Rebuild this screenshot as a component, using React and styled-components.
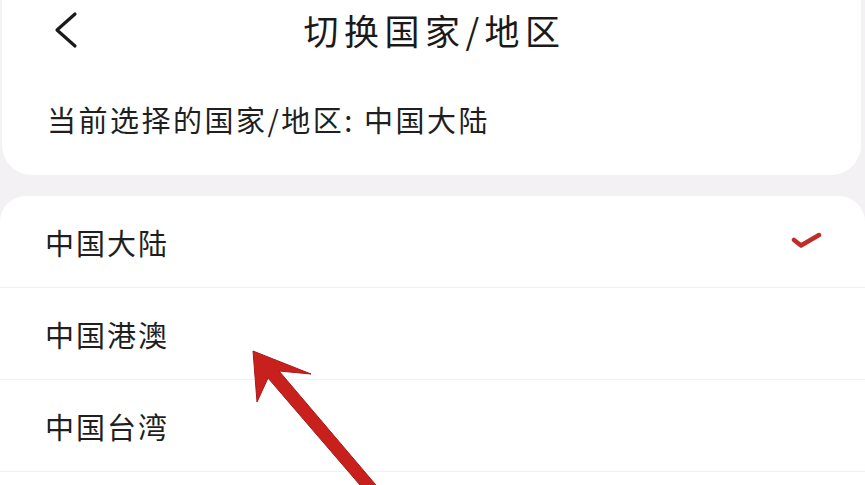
import React from 'react';
import styled, { createGlobalStyle } from 'styled-components';

const GlobalStyle = createGlobalStyle`
	html, body {
		margin: 0;
		padding: 0;
		background: #f4f1f4;
	}
	body {
		font-family: "Noto Sans CJK SC", "Noto Sans", sans-serif;
		color: #1f1f1f;
	}
	#root {
		min-height: 100vh;
	}
`;

const Page = styled.div`
	position: relative;
	display: flex;
	flex-direction: column;
	width: 865px;
	height: 485px;
	overflow: hidden;
	background: #f4f1f4;
`;

const TopCard = styled.section`
	margin: 0 4px 0 2px;
	background: #fff;
	border-radius: 0 0 30px 30px;
`;

const Header = styled.header`
	display: grid;
	grid-template-columns: 1fr auto 1fr;
	align-items: center;
	height: 60px;
`;

const BackBtn = styled.button`
	justify-self: start;
	display: flex;
	align-items: center;
	margin-left: 51px;
	padding: 0;
	width: 26px;
	height: 40px;
	border: none;
	background: transparent;
`;

const Title = styled.h1`
	margin: 0 0 0 6px;
	font-size: 35px;
	font-weight: 400;
	letter-spacing: 5.5px;
	line-height: 40px;
	color: #1a1a1a;
`;

const Current = styled.div`
	padding: 39px 45px 36px;
	font-size: 29px;
	letter-spacing: 2.5px;
	line-height: 40px;
`;

const ListCard = styled.ul`
	flex: 1;
	list-style: none;
	margin: 21px 0 0 0;
	padding: 0;
	background: #fff;
	border-radius: 26px 26px 0 0;
`;

const Row = styled.li`
	display: flex;
	align-items: center;
	justify-content: space-between;
	height: 91px;
	padding: 0 43px 0 45px;
	border-bottom: 1px solid #f2f1f2;
	font-size: 29px;
	letter-spacing: 2px;
`;

const Arrow = styled.svg`
	position: absolute;
	left: 0;
	top: 0;
	pointer-events: none;
`;

const regions = [
	{ name: '中国大陆', checked: true },
	{ name: '中国港澳' },
	{ name: '中国台湾' },
];

const Check = () => (
	<svg width="32" height="20" viewBox="0 0 32 20">
		<polyline
			points="4,8 11,13.5 29,3"
			fill="none"
			stroke="#c02d29"
			strokeWidth="4.5"
			strokeLinecap="round"
			strokeLinejoin="round"
		/>
	</svg>
);

export default function App() {
	return (
		<Page>
			<GlobalStyle />
			<TopCard>
				<Header>
					<BackBtn aria-label="返回">
						<svg width="26" height="40" viewBox="0 0 26 40">
							<polyline
								points="22,4 4,20 22,36"
								fill="none"
								stroke="#1a1a1a"
								strokeWidth="3.2"
								strokeLinecap="round"
								strokeLinejoin="round"
							/>
						</svg>
					</BackBtn>
					<Title>切换国家/地区</Title>
					<span />
				</Header>
				<Current>当前选择的国家/地区: 中国大陆</Current>
			</TopCard>
			<ListCard>
				{regions.map(item => (
					<Row key={item.name}>
						<span>{item.name}</span>
						{item.checked && <Check />}
					</Row>
				))}
			</ListCard>
			<Arrow width="865" height="485" viewBox="0 0 865 485">
				<polygon
					points="253,351 311,374 279,371 381,491 372,499 268,378 257,402"
					fill="#c8211d"
					stroke="#a8191a"
					strokeWidth="1"
					strokeLinejoin="round"
				/>
			</Arrow>
		</Page>
	);
}
